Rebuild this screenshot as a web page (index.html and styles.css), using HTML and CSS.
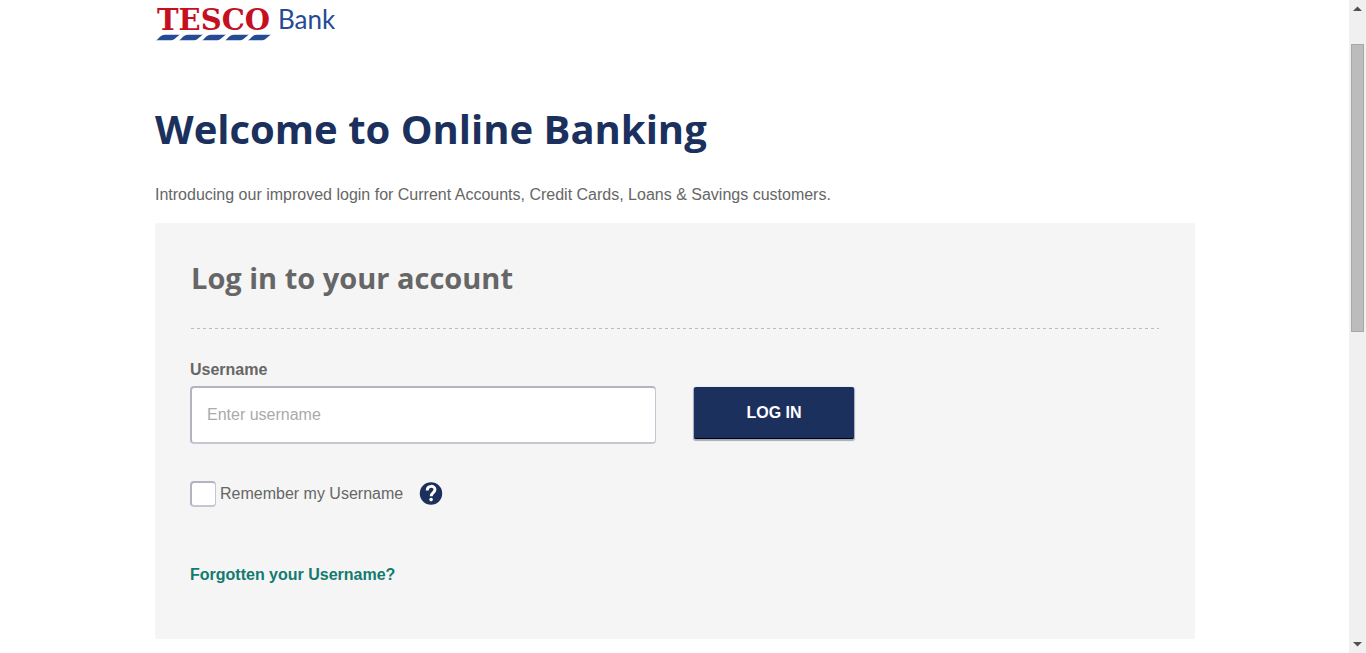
FILE: index.html
```html
<!DOCTYPE html>
<html lang="en">
<head>
<meta charset="utf-8">
<meta name="viewport" content="width=device-width, initial-scale=1">
<title>Tesco Bank Online Banking</title>
<link rel="stylesheet" href="styles.css">
</head>
<body>
<div class="viewport">
  <div class="page">
    <header class="header">
      <a class="logo" href="#" aria-label="Tesco Bank">
        <svg width="182" height="44" viewBox="0 0 182 44">
          <text class="logo-tesco" x="2" y="30">TESCO</text>
          <g fill="#254b94">
            <path d="M1 40.3C4 39 5 34.7 10 34.7H25C22 36 20 40.3 15 40.3Z"/>
            <path d="M24 40.3C27 39 28 34.7 33 34.7H48C45 36 43 40.3 38 40.3Z"/>
            <path d="M47 40.3C50 39 51 34.7 56 34.7H71C68 36 66 40.3 61 40.3Z"/>
            <path d="M70 40.3C73 39 74 34.7 79 34.7H94C91 36 89 40.3 84 40.3Z"/>
            <path d="M93 40.3C96 39 97 34.7 102 34.7H116C113 36 111 40.3 106 40.3Z"/>
          </g>
          <text class="logo-bank" x="123" y="29">Bank</text>
        </svg>
      </a>
    </header>
    <main>
      <h1 class="title">Welcome to Online Banking</h1>
      <p class="intro">Introducing our improved login for Current Accounts, Credit Cards, Loans &amp; Savings customers.</p>
      <section class="panel">
        <h2 class="panel-title">Log in to your account</h2>
        <form class="form">
          <label class="label" for="username">Username</label>
          <div class="row">
            <input class="field" id="username" type="text" placeholder="Enter username">
            <button class="submit" type="submit">LOG IN</button>
          </div>
          <div class="remember">
            <input class="check" id="remember" type="checkbox">
            <label for="remember">Remember my Username</label>
            <button class="help" type="button" aria-label="Help">
              <svg width="24" height="24" viewBox="0 0 24 24">
                <circle cx="12" cy="11.5" r="11.2" fill="#1b305d"/>
                <path d="M8.2 8.4C8.2 3 16 3.2 16 7.6C16 10.6 12.2 10.6 12.2 14.2" fill="none" stroke="#fff" stroke-width="2.9"/>
                <circle cx="12.1" cy="17.6" r="1.8" fill="#fff"/>
              </svg>
            </button>
          </div>
          <a class="forgot" href="#">Forgotten your Username?</a>
        </form>
      </section>
    </main>
  </div>
  <div class="scrollbar" aria-hidden="true">
    <svg class="arrow" width="17" height="17" viewBox="0 0 17 17"><path d="M4 11L8.5 6.5L13 11Z" fill="#505050"/></svg>
    <div class="track"><div class="thumb"></div></div>
    <svg class="arrow" width="17" height="17" viewBox="0 0 17 17"><path d="M4 6L8.5 10.5L13 6Z" fill="#505050"/></svg>
  </div>
</div>
</body>
</html>
```
FILE: styles.css
```css
* {
  box-sizing: border-box;
}

body {
  margin: 0;
  background: #fff;
  color: #666;
  font: 16px/24px "Liberation Sans", Arial, sans-serif;
}

.viewport {
  display: flex;
  height: 100vh;
  overflow: hidden;
}

.page {
  flex: 1;
  min-width: 0;
  padding-left: 1px;
}

.header,
main {
  max-width: 1040px;
  margin: 0 auto;
}

.logo,
.logo svg {
  display: block;
}

.logo {
  width: 182px;
}

.logo-tesco {
  font: bold 29px "DejaVu Serif", serif;
  fill: #c4101f;
}

.logo-bank {
  font: 26px Lato, sans-serif;
  fill: #254b94;
}

.title,
.panel-title {
  margin: 0;
  font-family: "Open Sans", "Noto Sans", sans-serif;
  font-weight: 700;
}

.title {
  padding-top: 60px;
  color: #1b305d;
  font-size: 40px;
  line-height: 50px;
}

.intro {
  margin: 0;
  padding: 29px 0 16px;
}

.panel {
  padding: 32px 36px 52px;
  border-radius: 2px;
  background: #f5f5f5;
}

.panel-title {
  padding-bottom: 28px;
  font-size: 29px;
  line-height: 46px;
  background: repeating-linear-gradient(90deg, #bbb 0 3px, transparent 3px 6px) bottom / 100% 1px no-repeat;
}

.form {
  margin-left: -1px;
  padding-top: 29px;
}

.label {
  display: block;
  font-weight: bold;
}

.row {
  display: flex;
  align-items: flex-start;
  gap: 38px;
  padding-top: 4px;
}

.field,
.check {
  margin: 0;
  border: 1px solid #c4c6d0;
  border-top: 2px solid #b2b4c2;
  border-left: 2px solid #b2b4c2;
  border-bottom-width: 2px;
  border-radius: 4px;
  background: #fff;
}

.field {
  flex: 0 1 466px;
  min-width: 0;
  height: 58px;
  padding: 0 15px;
  color: #666;
  font: inherit;
}

.field::placeholder {
  color: #aaa;
  opacity: 1;
}

.submit {
  width: 160px;
  height: 52px;
  margin-top: 1px;
  padding: 0;
  border: 0;
  border-bottom: 1px solid #000;
  border-radius: 2px;
  box-shadow: 0 1px 1px 1px #a4abbd;
  background: #1b305d;
  color: #fff;
  font: bold 16px "Liberation Sans", Arial, sans-serif;
}

.remember {
  display: flex;
  align-items: center;
  padding-top: 37px;
}

.check {
  width: 26px;
  height: 26px;
  margin-right: 4px;
  appearance: none;
}

.help {
  margin-left: 16px;
  padding: 0;
  border: 0;
  background: none;
}

.help svg {
  display: block;
}

.forgot {
  display: inline-block;
  padding-top: 56px;
  color: #137a6f;
  font-weight: bold;
  text-decoration: none;
}

.scrollbar {
  display: flex;
  flex-direction: column;
  width: 17px;
  background: #f0f0f0;
}

.track {
  flex: 1;
  padding: 27px 2px 0;
}

.thumb {
  height: 48.6%;
  border: 1px solid #a8a8a8;
  background: #bcbcbc;
}
```
